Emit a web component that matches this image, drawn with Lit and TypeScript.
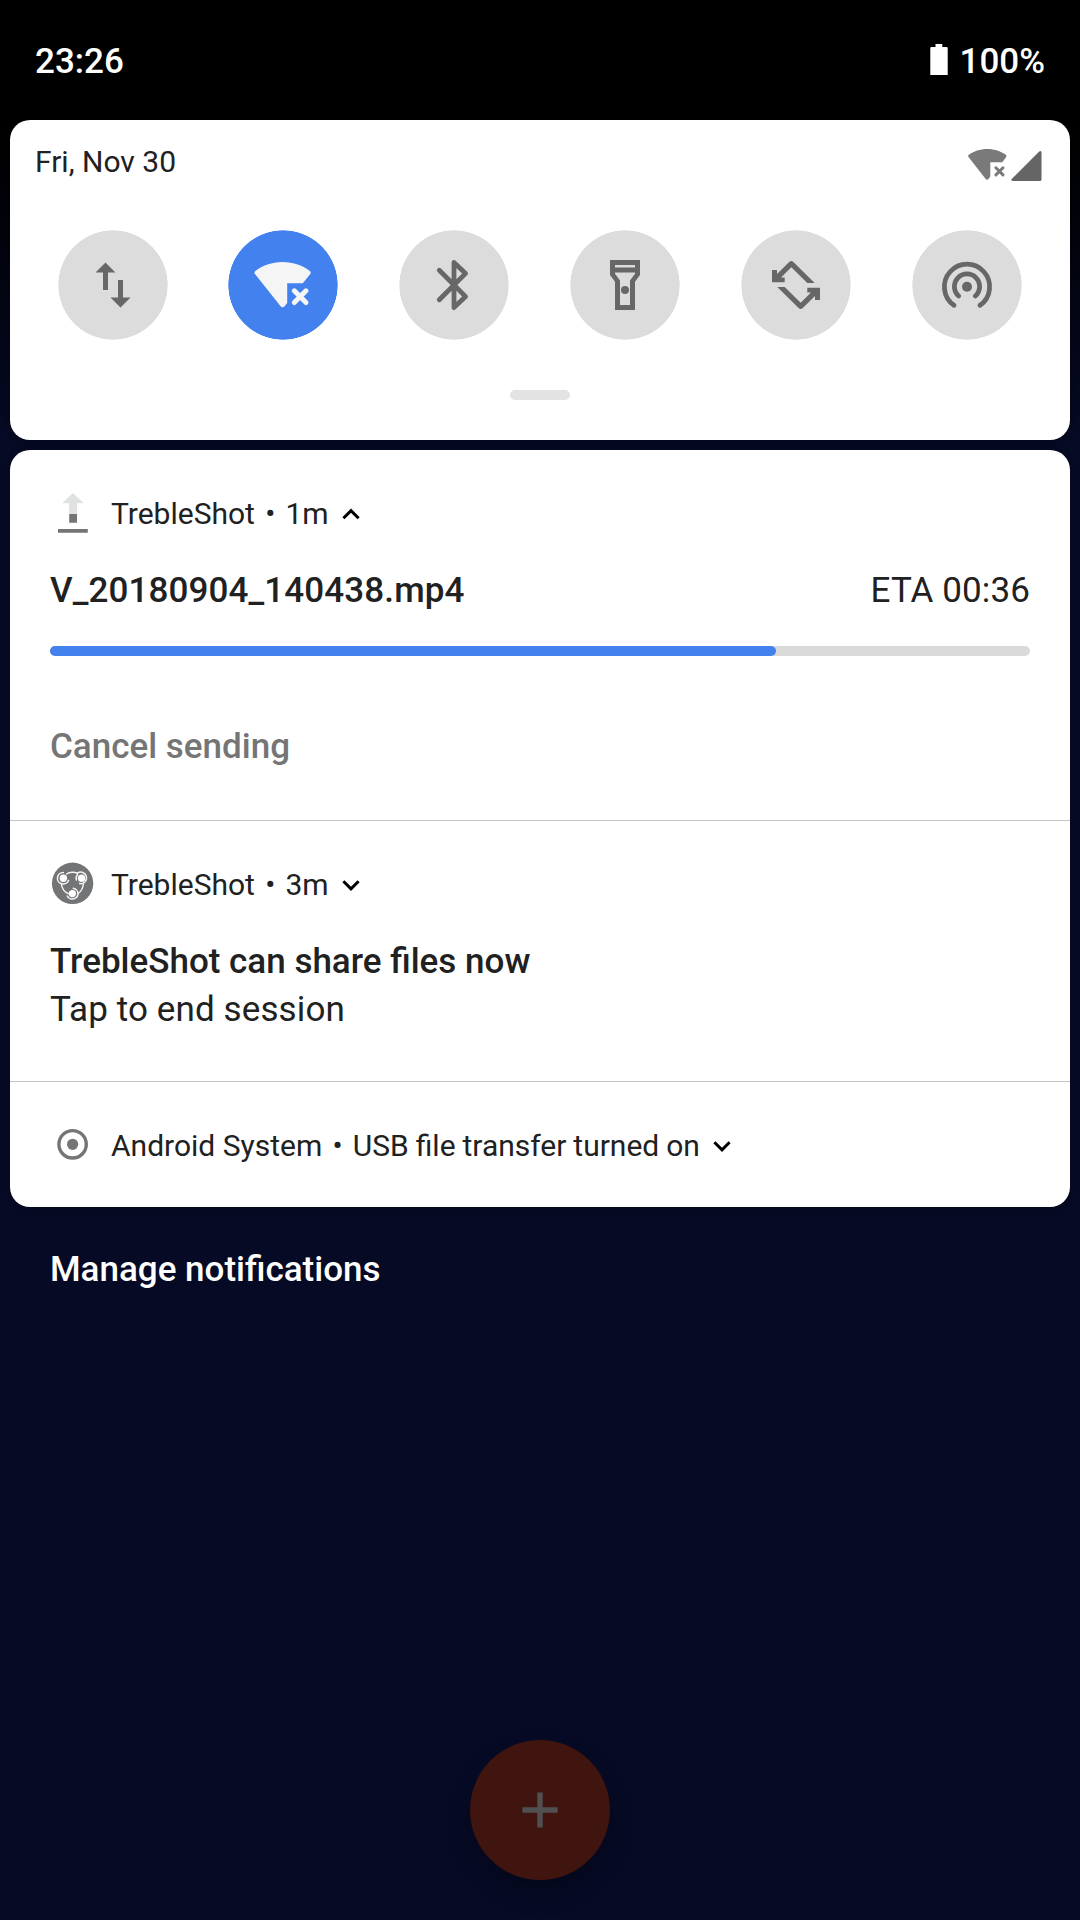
import { LitElement, html, css, svg, type TemplateResult, type SVGTemplateResult } from "lit";
import { customElement, property } from "lit/decorators.js";
import { classMap } from "lit/directives/class-map.js";
import { styleMap } from "lit/directives/style-map.js";

const tileGlyphs: Record<string, SVGTemplateResult> = {
  data: svg`<path transform="scale(2.5)" d="M16 17.01V10h-2v7.01h-3L15 21l4-3.99h-3zM9 3L5 6.99h3V14h2V6.99h3L9 3z"/>`,
  wifi: svg`<path d="M29.6 7C18.7 7 9.3 10.8 2.4 15.9C1.3 16.7 1.1 18 2 19.1L27.6 51.3C28.7 52.7 30.5 52.7 31.6 51.3L34.2 48V28.3H49.8L57.3 19.1C58.1 18 57.9 16.7 56.8 15.9C49.9 10.8 40.5 7 29.6 7Z"/>
    <path class="line" stroke-width="5" d="M41.3 35.8L53 47.5M53 35.8L41.3 47.5"/>`,
  bluetooth: svg`<path class="line" stroke-width="4.8" d="M15.3 15.3L41.6 41.6L30 52.6V7.4L41.6 18.4L15.3 44.7"/>`,
  flashlight: svg`<path fill-rule="evenodd" d="M15 5H45V20L40 26.8V55H20V26.8L15 20ZM20 10V12.4H40V10ZM20 17.6V18.7L25 25.4V50H35V25.4L40 18.7V17.6Z"/>
    <circle cx="30" cy="35" r="4"/>`,
  rotate: svg`<path d="M6 15H11V18.9L23.2 7Q25.3 5 27.4 7L48.7 28H41.3L25.3 12.3L15 22.4H18.7V27.3H6Z"/>
    <path transform="rotate(180 30 30)" d="M6 15H11V18.9L23.2 7Q25.3 5 27.4 7L48.7 28H41.3L25.3 12.3L15 22.4H18.7V27.3H6Z"/>`,
  hotspot: svg`<circle cx="30" cy="31.7" r="5"/>
    <path class="line" stroke-width="4.8" d="M17 50.3A22.6 22.6 0 1 1 43 50.3M21.7 41A12.6 12.6 0 1 1 38.3 41"/>`,
};

const appGlyphs: Record<string, SVGTemplateResult> = {
  upload: svg`<path fill="#e0e2e1" d="M23 3L33.8 13.3H27V24H19.2V13.3H12.2Z"/>
    <path fill="#757575" d="M19.2 24H27V32.7H19.2ZM8 39H37.8V42.8H8Z"/>`,
  trebleshot: svg`<circle cx="22.6" cy="22.3" r="20.7" fill="#737475"/>
    <g fill="none" stroke="#f4f4f4" stroke-linecap="round" stroke-width="1.5">
      <path d="M13.4 11.4A5.8 5.8 0 1 0 18.6 19.4M16.6 13C19.5 10.9 24.5 10.9 27.4 12.2"/>
      <path d="M27.4 12.2A5.8 5.8 0 1 1 29.6 22.6M27.6 13.4A5.8 5.8 0 0 0 26.4 19"/>
      <path d="M11.4 23C11.9 27.6 13.8 30.8 18.4 32.6M33.4 23C32.8 27.6 31 30.8 27.8 32.6"/>
      <path d="M17.2 35A5.8 5.8 0 0 0 28 33.4A5.8 5.8 0 0 0 23.2 27.2"/>
    </g>
    <g fill="#fff"><circle cx="13.4" cy="17.2" r="3.7"/><circle cx="31.6" cy="17.2" r="3.7"/><circle cx="22.4" cy="32.6" r="3.6"/></g>`,
  system: svg`<circle cx="22.6" cy="22.3" r="13.7" fill="none" stroke="#757575" stroke-width="3.4"/>
    <circle cx="22.6" cy="22.3" r="5.6" fill="#757575"/>`,
};

@customElement("quick-tile")
class QuickTile extends LitElement {
  @property() glyph = "";
  @property({ type: Boolean }) active = false;

  static styles = css`
    :host { display: block; }
    .disc {
      width: 110px; height: 110px; border-radius: 50%;
      display: flex; align-items: center; justify-content: center;
      background: radial-gradient(circle, #dcdcdc 54.3px, transparent 55px); color: #676767;
    }
    .on { background: radial-gradient(circle, #4382ee 54.3px, transparent 55px); color: #f5f5f5; }
    .glyph { width: 60px; height: 60px; fill: currentColor; }
    .line { fill: none; stroke: currentColor; stroke-linecap: round; stroke-linejoin: round; }
  `;

  render() {
    return html`<div class=${classMap({ disc: true, on: this.active })}>
      <svg class="glyph" viewBox="0 0 60 60">${tileGlyphs[this.glyph]}</svg>
    </div>`;
  }
}

@customElement("notification-item")
class NotificationItem extends LitElement {
  @property() icon = "";
  @property() app = "";
  @property() detail = "";
  @property({ type: Boolean }) expanded = false;

  static styles = css`
    :host { display: block; padding: 40px 40px 0; }
    .header {
      display: flex; align-items: center; height: 47px;
      font-size: 30px; line-height: 35px; color: #212121; white-space: pre;
    }
    .icon { width: 47px; height: 47px; margin-right: 14px; }
    .detail { word-spacing: -0.5px; }
    .dot { width: 30.6px; text-align: center; }
    .chevron { width: 18px; height: 12px; margin-left: 13.4px; fill: none; stroke: #000; stroke-width: 3; }
  `;

  render(): TemplateResult {
    return html`
      <div class="header">
        <svg class="icon" viewBox="0 0 47 47">${appGlyphs[this.icon]}</svg>
        <span>${this.app}</span><span class="dot">•</span><span class="detail">${this.detail}</span>
        <svg class="chevron" viewBox="0 0 18 12">
          <path d=${this.expanded ? "M1.4 10.2L9 2.6L16.6 10.2" : "M1.4 2.2L9 9.8L16.6 2.2"} />
        </svg>
      </div>
      <slot></slot>
    `;
  }
}

@customElement("app-root")
class AppRoot extends LitElement {
  private tiles = [
    { glyph: "data", active: false },
    { glyph: "wifi", active: true },
    { glyph: "bluetooth", active: false },
    { glyph: "flashlight", active: false },
    { glyph: "rotate", active: false },
    { glyph: "hotspot", active: false },
  ];
  private progress = 74.1;

  static styles = css`
    :host {
      display: flex; flex-direction: column; box-sizing: border-box;
      width: 1080px; height: 1920px; overflow: hidden; padding: 0 10px 40px;
      font-family: Roboto, "Liberation Sans", sans-serif;
      font-size: 35px; line-height: 41px; color: #212121;
      background: linear-gradient(#000 0, #000 130px, #060a24 440px, #060a24 100%);
    }
    .status {
      display: flex; justify-content: space-between; box-sizing: border-box;
      height: 120px; padding: 41px 25px 0; color: #fff; font-weight: 500;
    }
    .battery { display: flex; }
    .battery-icon { width: 18px; height: 32px; margin: 3px 12px 0 0; fill: #fff; }
    .card { background: #fff; border-radius: 20px; box-shadow: 0 2px 8px rgba(0, 0, 0, 0.3); }
    .quick { height: 320px; box-sizing: border-box; padding: 24px 25px 0; }
    .date-row {
      display: flex; justify-content: space-between; height: 40px;
      font-size: 30px; line-height: 35px;
    }
    .signals { display: flex; }
    .wifi-small { width: 39px; height: 31px; margin: 5px 4px 0 0; fill: #7a7a7a; }
    .wifi-x { fill: none; stroke: #7a7a7a; stroke-width: 3; stroke-linecap: round; }
    .cell { width: 31px; height: 30px; margin: 7px 3px 0 0; fill: #656565; }
    .tiles {
      display: grid; grid-template-columns: 170px repeat(4, 171px) 110px;
      padding-left: 23px; margin-top: 46px;
    }
    .handle { width: 60px; height: 10px; border-radius: 5px; background: #e3e3e3; margin: 50px auto 0; }
    .list { margin-top: 10px; height: 757px; }
    .divider { height: 1px; background: #c3c3c3; }
    .title-row { display: flex; justify-content: space-between; margin-top: 33px; }
    .title { font-weight: 500; }
    .spaced { letter-spacing: 0.11px; }
    .track { height: 10px; margin-top: 35px; border-radius: 5px; background: #dadada; }
    .bar { height: 10px; border-radius: 5px; background: #4382ee; }
    .action { margin: 70px 0 53px; font-weight: 500; color: #757575; }
    .body { margin: 7px 0 51px; }
    .manage { margin: 42px 40px 0; font-weight: 500; color: #fff; }
    .fab {
      display: flex; align-items: center; justify-content: center;
      width: 140px; height: 140px; margin: auto auto 0; border-radius: 50%;
      background: #40140f; box-shadow: 0 12px 24px rgba(0, 0, 0, 0.25);
    }
    .plus { width: 36px; height: 36px; fill: #505050; }
  `;

  render() {
    return html`
      <div class="status">
        <span>23:26</span>
        <div class="battery">
          <svg class="battery-icon" viewBox="0 0 18 32"><path d="M5.5 0H12.3V3H16.6Q17.7 3 17.7 4.2V31H.3V4.2Q.3 3 1.4 3H5.5Z" /></svg>
          <span>100%</span>
        </div>
      </div>

      <div class="card quick">
        <div class="date-row">
          <span>Fri, Nov 30</span>
          <div class="signals">
            <svg class="wifi-small" viewBox="0 0 39 31">
              <path d="M19.3 0C11.9 0 5.5 2.3.8 5.8C.1 6.4 0 7.4.5 8.1L17.7 30C18.5 31 19.7 31 20.5 30L22.3 27.6V13.3H34.3L38.2 8.1C38.7 7.4 38.5 6.4 37.8 5.8C33.1 2.3 26.7 0 19.3 0Z" />
              <path class="wifi-x" d="M27.9 18.8L35 25.9M35 18.8L27.9 25.9" />
            </svg>
            <svg class="cell" viewBox="0 0 31 30"><path d="M28.2.6Q30.3-.8 30.5 1.4V28.6Q30.5 30 29.1 30H1.7Q-.6 29.7.7 28Z" /></svg>
          </div>
        </div>
        <div class="tiles">
          ${this.tiles.map((t) => html`<quick-tile .glyph=${t.glyph} .active=${t.active}></quick-tile>`)}
        </div>
        <div class="handle"></div>
      </div>

      <div class="card list">
        <notification-item icon="upload" app="TrebleShot" detail="1m" expanded>
          <div class="title-row">
            <span class="title spaced">V_20180904_140438.mp4</span>
            <span class="spaced">ETA 00:36</span>
          </div>
          <div class="track"><div class="bar" style=${styleMap({ width: `${this.progress}%` })}></div></div>
          <div class="action">Cancel sending</div>
        </notification-item>
        <div class="divider"></div>
        <notification-item icon="trebleshot" app="TrebleShot" detail="3m">
          <div class="title-row"><span class="title">TrebleShot can share files now</span></div>
          <div class="body spaced">Tap to end session</div>
        </notification-item>
        <div class="divider"></div>
        <notification-item icon="system" app="Android System" detail="USB file transfer turned on"></notification-item>
      </div>

      <div class="manage">Manage notifications</div>

      <div class="fab">
        <svg class="plus" viewBox="0 0 36 36"><path d="M15.3 0.4H20.7V15.3H35.6V20.7H20.7V35.6H15.3V20.7H.4V15.3H15.3Z" /></svg>
      </div>
    `;
  }
}
